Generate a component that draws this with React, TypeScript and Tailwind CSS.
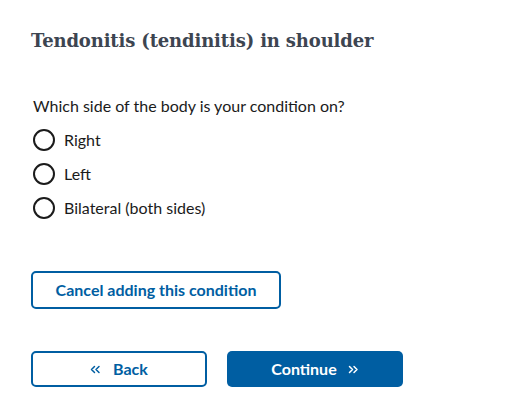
function Chevrons({ dir }: { dir: "left" | "right" }) {
  const d = dir === "left" ? "M4.5 1.5 L1.5 4.5 L4.5 7.5 M9 1.5 L6 4.5 L9 7.5" : "M1.5 1.5 L4.5 4.5 L1.5 7.5 M6 1.5 L9 4.5 L6 7.5";
  return (
    <svg width="11" height="9" viewBox="0 0 11 9" fill="none" stroke="currentColor" strokeWidth="1.5" strokeLinecap="round" strokeLinejoin="round">
      <path d={d} />
    </svg>
  );
}

export default function App() {
  const options = ["Right", "Left", "Bilateral (both sides)"];
  return (
    <div className="min-h-screen bg-white px-[31px] pt-[27px] text-[#1b1b1b]">
      <h1 className="font-['DejaVu_Serif',serif] text-[18px] font-bold leading-[28px] tracking-[-0.15px] text-[#3d4551]">
        Tendonitis (tendinitis) in shoulder
      </h1>

      <fieldset className="mt-[39px] font-['Lato',sans-serif]">
        <legend className="ml-[2px] text-[16px] leading-[24px]">
          Which side of the body is your condition on?
        </legend>
        <div className="mt-[10px] flex flex-col gap-[10px]">
          {options.map((o) => (
            <label key={o} className="flex h-[24px] items-center gap-[9px] pl-[2px] text-[16px]">
              <span className="h-[22px] w-[22px] rounded-full border-2 border-[#1b1b1b] bg-white" />
              <span>{o}</span>
            </label>
          ))}
        </div>
      </fieldset>

      <button className="mt-[51px] flex h-[38px] w-[250px] items-center justify-center rounded-[5px] border-2 border-[#005ea2] bg-white font-['Lato',sans-serif] text-[16px] font-bold text-[#005ea2]">
        Cancel adding this condition
      </button>

      <div className="mt-[42px] flex gap-[20px] font-['Lato',sans-serif]">
        <button className="flex h-[36px] w-[176px] items-center justify-center gap-[12px] rounded-[5px] border-2 border-[#005ea2] bg-white text-[16px] font-bold text-[#005ea2]">
          <Chevrons dir="left" />
          <span>Back</span>
        </button>
        <button className="flex h-[36px] w-[176px] items-center justify-center gap-[11px] rounded-[5px] bg-[#005ea2] text-[16px] font-bold text-white">
          <span>Continue</span>
          <Chevrons dir="right" />
        </button>
      </div>
    </div>
  );
}
